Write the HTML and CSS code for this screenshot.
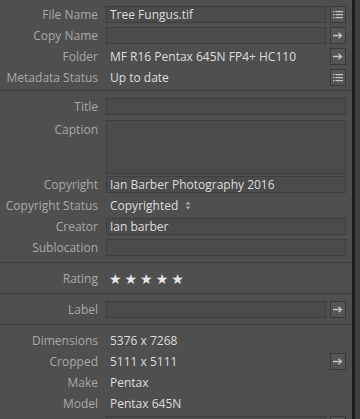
FILE: index.html
```html
<!DOCTYPE html>
<html lang="en">
<head>
    <meta charset="UTF-8">
    <meta name="viewport" content="width=device-width, initial-scale=1.0">
    <title>Metadata</title>
    <link rel="stylesheet" href="styles.css">
</head>
<body>
    <div class="panel">
        <div class="section first">
            <div class="row">
                <span class="label">File Name</span>
                <div class="value">
                    <div class="field">Tree Fungus.tif</div>
                    <button class="icon-btn">
                        <svg width="12" height="11" viewBox="0 0 12 11"><g fill="#c4c4c4"><rect x="1" y="2" width="1.5" height="1.2"/><rect x="3.5" y="2" width="7.5" height="1.2"/><rect x="1" y="5" width="1.5" height="1.2"/><rect x="3.5" y="5" width="7.5" height="1.2"/><rect x="1" y="8" width="1.5" height="1.2"/><rect x="3.5" y="8" width="7.5" height="1.2"/></g></svg>
                    </button>
                </div>
            </div>
            <div class="row">
                <span class="label">Copy Name</span>
                <div class="value">
                    <div class="field"></div>
                    <button class="icon-btn">
                        <svg width="12" height="9" viewBox="0 0 12 9"><path d="M1 4.5h8M6.5 1.8l3 2.7-3 2.7" fill="none" stroke="#c4c4c4" stroke-width="1.3"/></svg>
                    </button>
                </div>
            </div>
            <div class="row">
                <span class="label">Folder</span>
                <div class="value">
                    <span class="text">MF R16 Pentax 645N FP4+ HC110</span>
                    <button class="icon-btn">
                        <svg width="12" height="9" viewBox="0 0 12 9"><path d="M1 4.5h8M6.5 1.8l3 2.7-3 2.7" fill="none" stroke="#c4c4c4" stroke-width="1.3"/></svg>
                    </button>
                </div>
            </div>
            <div class="row">
                <span class="label">Metadata Status</span>
                <div class="value">
                    <span class="text">Up to date</span>
                    <button class="icon-btn">
                        <svg width="12" height="11" viewBox="0 0 12 11"><g fill="#c4c4c4"><rect x="1" y="2" width="1.5" height="1.2"/><rect x="3.5" y="2" width="7.5" height="1.2"/><rect x="1" y="5" width="1.5" height="1.2"/><rect x="3.5" y="5" width="7.5" height="1.2"/><rect x="1" y="8" width="1.5" height="1.2"/><rect x="3.5" y="8" width="7.5" height="1.2"/></g></svg>
                    </button>
                </div>
            </div>
        </div>

        <div class="section">
            <div class="row">
                <span class="label">Title</span>
                <div class="value"><div class="field"></div></div>
            </div>
            <div class="row tall">
                <span class="label">Caption</span>
                <div class="value"><div class="field area"></div></div>
            </div>
            <div class="row">
                <span class="label">Copyright</span>
                <div class="value"><div class="field">Ian Barber Photography 2016</div></div>
            </div>
            <div class="row">
                <span class="label">Copyright Status</span>
                <div class="value">
                    <span class="text">Copyrighted</span>
                    <svg class="updown" width="6" height="9" viewBox="0 0 6 9"><path d="M3 0.5L5.5 3.5H0.5Z M3 8.5L5.5 5.5H0.5Z" fill="#a8a8a8"/></svg>
                </div>
            </div>
            <div class="row">
                <span class="label">Creator</span>
                <div class="value"><div class="field">Ian barber</div></div>
            </div>
            <div class="row">
                <span class="label">Sublocation</span>
                <div class="value"><div class="field"></div></div>
            </div>
        </div>

        <div class="section">
            <div class="row">
                <span class="label">Rating</span>
                <div class="value"><span class="stars">★★★★★</span></div>
            </div>
        </div>

        <div class="section">
            <div class="row">
                <span class="label">Label</span>
                <div class="value">
                    <div class="field"></div>
                    <button class="icon-btn">
                        <svg width="12" height="9" viewBox="0 0 12 9"><path d="M1 4.5h8M6.5 1.8l3 2.7-3 2.7" fill="none" stroke="#c4c4c4" stroke-width="1.3"/></svg>
                    </button>
                </div>
            </div>
        </div>

        <div class="section">
            <div class="row">
                <span class="label">Dimensions</span>
                <div class="value"><span class="text">5376 x 7268</span></div>
            </div>
            <div class="row">
                <span class="label">Cropped</span>
                <div class="value">
                    <span class="text">5111 x 5111</span>
                    <button class="icon-btn">
                        <svg width="12" height="9" viewBox="0 0 12 9"><path d="M1 4.5h8M6.5 1.8l3 2.7-3 2.7" fill="none" stroke="#c4c4c4" stroke-width="1.3"/></svg>
                    </button>
                </div>
            </div>
            <div class="row">
                <span class="label">Make</span>
                <div class="value"><span class="text">Pentax</span></div>
            </div>
            <div class="row">
                <span class="label">Model</span>
                <div class="value"><span class="text">Pentax 645N</span></div>
            </div>
            <div class="row">
                <span class="label"></span>
                <div class="value">
                    <div class="field"></div>
                    <button class="icon-btn">
                        <svg width="12" height="9" viewBox="0 0 12 9"><path d="M1 4.5h8M6.5 1.8l3 2.7-3 2.7" fill="none" stroke="#c4c4c4" stroke-width="1.3"/></svg>
                    </button>
                </div>
            </div>
        </div>
    </div>
    <div class="divider"></div>
    <div class="strip"></div>
</body>
</html>
```

FILE: styles.css
```css
html, body {
    height: 100%;
}

body {
    margin: 0;
    display: flex;
    overflow: hidden;
    background-color: #4f4f4f;
    font-family: "Open Sans", "Noto Sans", sans-serif;
    font-size: 12px;
}

.panel {
    flex: 1;
    min-width: 0;
}

.divider {
    width: 3px;
    background-color: #1b1b1b;
}

.strip {
    width: 5px;
    background-color: #3e3e3e;
}

.section {
    padding: 5px 6px 4px 0;
    border-top: 1px solid #3f3f3f;
}

.section.first {
    padding-top: 4px;
    padding-bottom: 2px;
    border-top: none;
}

.row {
    display: flex;
    align-items: center;
    height: 21px;
}

.row.tall {
    height: 57px;
    align-items: flex-start;
}

.label {
    width: 98px;
    flex-shrink: 0;
    text-align: right;
    color: #a9a9a9;
    white-space: nowrap;
}

.row.tall .label {
    padding-top: 2px;
    line-height: 21px;
}

.value {
    flex: 1;
    display: flex;
    align-items: center;
    gap: 4px;
    margin-left: 8px;
    color: #dedede;
    min-width: 0;
}

.row.tall .value {
    margin-top: 3px;
}

.text {
    padding-left: 4px;
    white-space: nowrap;
}

.field {
    flex: 1;
    height: 17px;
    box-sizing: border-box;
    padding-left: 3px;
    line-height: 15px;
    background-color: #4b4b4b;
    border: 1px solid #3e3e3e;
    white-space: nowrap;
    overflow: hidden;
}

.field.area {
    height: 54px;
}

.text + .icon-btn {
    margin-left: auto;
}

.icon-btn {
    width: 16px;
    height: 17px;
    padding: 0;
    box-sizing: border-box;
    display: flex;
    align-items: center;
    justify-content: center;
    background-color: #555555;
    border: 1px solid #383838;
    flex-shrink: 0;
}

.updown {
    margin-left: 3px;
}

.stars {
    padding-left: 3px;
    letter-spacing: 3px;
    font-family: "DejaVu Sans", sans-serif;
    font-size: 14px;
    color: #e6e6e6;
}
```
